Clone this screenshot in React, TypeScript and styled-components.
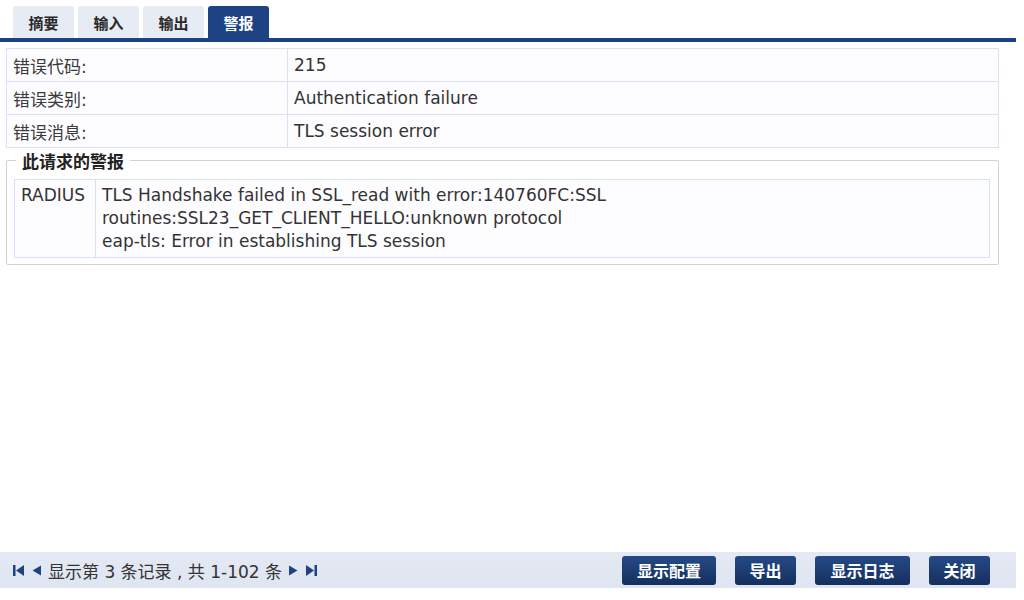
import React from "react";
import styled, { createGlobalStyle } from "styled-components";

const GlobalStyle = createGlobalStyle`
  html, body {
    margin: 0;
    padding: 0;
    background: #ffffff;
  }
  body {
    font-family: "DejaVu Sans", Verdana, "Noto Sans CJK SC", sans-serif;
    color: #333;
  }
`;

const Page = styled.div`
  width: 1016px;
  height: 600px;
  display: flex;
  flex-direction: column;
  background: #fff;
`;

const TabBar = styled.div`
  display: flex;
  gap: 4px;
  padding: 6px 0 0 13px;
  border-bottom: 4px solid #1d4384;
`;

const Tab = styled.div<{ $active?: boolean }>`
  width: 61px;
  height: 32px;
  display: flex;
  align-items: center;
  justify-content: center;
  font-size: 15px;
  font-weight: bold;
  border-radius: 3px 3px 0 0;
  background: ${(p) => (p.$active ? "#1d4384" : "#e7ebf3")};
  color: ${(p) => (p.$active ? "#fff" : "#2a2a2a")};
`;

const Content = styled.div`
  flex: 1;
  padding: 6px 17px 0 6px;
  display: flex;
  flex-direction: column;
`;

const InfoTable = styled.table`
  width: 100%;
  border-collapse: collapse;
  background: #fdfcff;
  font-size: 17px;

  td {
    border: 1px solid #e0def2;
    height: 32px;
    padding: 0 6px;
  }
  td:first-child {
    width: 268px;
    color: #3a3a3a;
  }
`;

const AlertBox = styled.fieldset`
  margin: 0;
  padding: 6px 8px 6px 7px;
  border: 1px solid #d2d2d2;
  border-radius: 2px;
`;

const Legend = styled.legend`
  font-size: 17px;
  font-weight: bold;
  color: #222;
  padding: 0 6px;
  margin-left: 2px;
`;

const AlertTable = styled.table`
  width: 100%;
  border-collapse: collapse;
  background: #fdfcff;
  font-size: 17px;

  td {
    border: 1px solid #d3e2f6;
    padding: 4px 6px 4px;
    vertical-align: top;
    line-height: 23px;
  }
  td:first-child {
    width: 68px;
  }
`;

const Footer = styled.div`
  height: 36px;
  margin-bottom: 12px;
  background: linear-gradient(#e4e9f3, #dfe5f1);
  display: flex;
  align-items: center;
  justify-content: space-between;
  padding: 0 26px 0 12px;
`;

const Pager = styled.div`
  display: flex;
  align-items: center;
  gap: 6px;
  font-size: 17px;
  color: #333;

  svg {
    fill: #1d4384;
  }
`;

const Buttons = styled.div`
  display: flex;
  gap: 19px;
`;

const Button = styled.button<{ $w: number }>`
  width: ${(p) => p.$w}px;
  height: 29px;
  border: none;
  border-radius: 3px;
  background: linear-gradient(#254a86, #152f5e);
  color: #fff;
  font-family: "Noto Sans CJK SC", sans-serif;
  font-size: 16px;
  font-weight: bold;
  cursor: pointer;
`;

const First = () => (
  <svg width="13" height="13" viewBox="0 0 13 13">
    <rect x="1" y="1" width="2.5" height="11" />
    <path d="M12 1 L4 6.5 L12 12 Z" />
  </svg>
);
const Prev = () => (
  <svg width="11" height="13" viewBox="0 0 11 13">
    <path d="M10 1.5 L1.5 6.5 L10 11.5 Z" />
  </svg>
);
const Next = () => (
  <svg width="11" height="13" viewBox="0 0 11 13">
    <path d="M1 1.5 L9.5 6.5 L1 11.5 Z" />
  </svg>
);
const Last = () => (
  <svg width="13" height="13" viewBox="0 0 13 13">
    <path d="M1 1 L9 6.5 L1 12 Z" />
    <rect x="9.5" y="1" width="2.5" height="11" />
  </svg>
);

const tabs = ["摘要", "输入", "输出", "警报"];
const rows = [
  ["错误代码:", "215"],
  ["错误类别:", "Authentication failure"],
  ["错误消息:", "TLS session error"],
];

export default function App() {
  return (
    <>
      <GlobalStyle />
      <Page>
        <TabBar>
          {tabs.map((t, i) => (
            <Tab key={t} $active={i === 3}>
              {t}
            </Tab>
          ))}
        </TabBar>
        <Content>
          <InfoTable>
            <tbody>
              {rows.map(([k, v]) => (
                <tr key={k}>
                  <td>{k}</td>
                  <td>{v}</td>
                </tr>
              ))}
            </tbody>
          </InfoTable>
          <AlertBox>
            <Legend>此请求的警报</Legend>
            <AlertTable>
              <tbody>
                <tr>
                  <td>RADIUS</td>
                  <td>
                    TLS Handshake failed in SSL_read with error:140760FC:SSL
                    <br />
                    routines:SSL23_GET_CLIENT_HELLO:unknown protocol
                    <br />
                    eap-tls: Error in establishing TLS session
                  </td>
                </tr>
              </tbody>
            </AlertTable>
          </AlertBox>
        </Content>
        <Footer>
          <Pager>
            <First />
            <Prev />
            <span>显示第 3 条记录 , 共 1-102 条</span>
            <Next />
            <Last />
          </Pager>
          <Buttons>
            <Button $w={94}>显示配置</Button>
            <Button $w={61}>导出</Button>
            <Button $w={95}>显示日志</Button>
            <Button $w={61}>关闭</Button>
          </Buttons>
        </Footer>
      </Page>
    </>
  );
}
